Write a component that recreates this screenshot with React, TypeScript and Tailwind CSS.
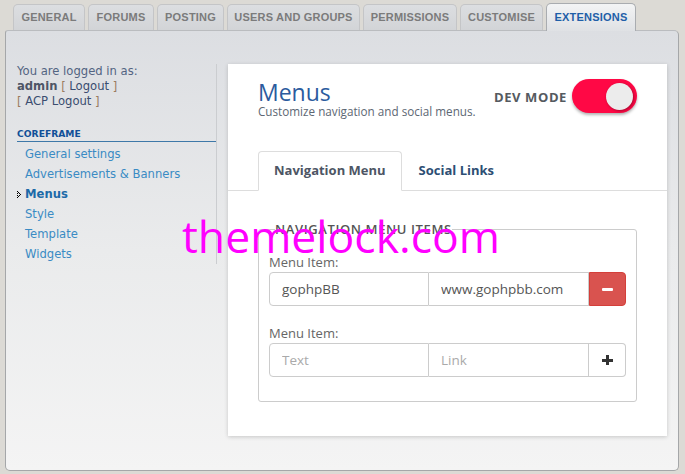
import React from "react";

const tabs: [string, string][] = [
  ["GENERAL", "w-[72px]"],
  ["FORUMS", "w-[66px]"],
  ["POSTING", "w-[67px]"],
  ["USERS AND GROUPS", "w-[133px]"],
  ["PERMISSIONS", "w-[94px]"],
  ["CUSTOMISE", "w-[83px]"],
  ["EXTENSIONS", "w-[90px]"],
];
const items = ["General settings", "Advertisements & Banners", "Menus", "Style", "Template", "Widgets"];

function Marker() {
  return (
    <svg width="4" height="7" viewBox="0 0 4 7" className="absolute left-[-8px] top-[7px]">
      <rect x="0" y="0" width="1" height="1" fill="#000" />
      <rect x="1" y="1" width="1" height="1" fill="#000" />
      <rect x="2" y="2" width="1" height="1" fill="#000" />
      <rect x="3" y="3" width="1" height="1" fill="#000" />
      <rect x="2" y="4" width="1" height="1" fill="#000" />
      <rect x="1" y="5" width="1" height="1" fill="#000" />
      <rect x="0" y="6" width="1" height="1" fill="#000" />
      <rect x="0" y="2" width="1" height="1" fill="#000" />
      <rect x="0" y="4" width="1" height="1" fill="#000" />
    </svg>
  );
}

export default function App() {
  return (
    <div className="relative w-[685px] h-[474px] overflow-hidden bg-[#dcdad5]">
      {/* top tabs */}
      <div className="flex items-end gap-[3px] pl-[13px] h-[30px] font-['Liberation_Sans',Arial,sans-serif] text-[11px] font-bold">
        {tabs.map(([t, w]) => {
          const active = t === "EXTENSIONS";
          return active ? (
            <div
              key={t}
              className={`${w} relative z-10 h-[28px] -mb-px flex items-center justify-center rounded-t-[5px] border border-b-0 border-[#a9acb0] bg-gradient-to-b from-[#f3f4f5] to-[#dfe1e4] text-[#1f5fa8] pb-[1px] tracking-[0.2px]`}
            >
              {t}
            </div>
          ) : (
            <div
              key={t}
              className={`${w} h-[26px] flex items-center justify-center rounded-t-[5px] border border-b-0 border-[#c4c5c7] bg-gradient-to-b from-[#dcdee1] to-[#d2d4d7] text-[#7b7b7b] tracking-[0.2px]`}
            >
              {t}
            </div>
          );
        })}
      </div>

      {/* main panel */}
      <div className="mx-[5px] h-[441px] w-[674px] flex items-start pt-[33px] rounded-[5px] rounded-tl-[3px] border border-[#a5a7a9] border-t-[#babcbf] bg-gradient-to-b from-[#dcdee2] via-[#eaebec] to-[#f4f4f4]">
        {/* sidebar */}
        <div className="ml-[11px] w-[200px] border-r border-[#cbcdd0] font-['DejaVu_Sans',Verdana,sans-serif]">
          <div className="text-[11.6px] leading-[15px] text-[#536482]">
            <div>You are logged in as:</div>
            <div>
              <span className="font-bold text-[#4e5566]">admin</span>{" "}
              <span className="text-[#9a7b60]">[</span> <span className="text-[#3a4d70]">Logout</span>{" "}
              <span className="text-[#9a7b60]">]</span>
            </div>
            <div>
              <span className="text-[#9a7b60]">[</span> <span className="text-[#3a4d70]">ACP Logout</span>{" "}
              <span className="text-[#9a7b60]">]</span>
            </div>
          </div>
          <div className="mt-[19px] pb-px border-b border-[#3e78a8] text-[9.2px] leading-[12px] font-bold text-[#115098]">
            COREFRAME
          </div>
          <div className="mt-[2px] pl-[8px] text-[11.6px] leading-[20px]">
            {items.map((i) =>
              i === "Menus" ? (
                <div key={i} className="relative font-bold text-[#1d6aa8]">
                  <Marker />
                  {i}
                </div>
              ) : (
                <div key={i} className="text-[#3a8bc4]">
                  {i}
                </div>
              )
            )}
          </div>
        </div>

        {/* card */}
        <div className="ml-[11px] w-[439px] h-[372px] bg-white shadow-[0_1px_4px_rgba(0,0,0,0.18)] font-['Open_Sans',sans-serif]">
          <div className="h-[87px] px-[30px] pt-[15px] flex justify-between items-start">
            <div>
              <div className="text-[23px] leading-[26px] text-[#2b5b9e]">Menus</div>
              <div className="text-[11.7px] leading-[13px] text-[#5d6773]">Customize navigation and social menus.</div>
            </div>
            <div className="flex items-center gap-[5px]">
              <span className="mt-[4px] text-[13px] font-bold tracking-[0.6px] text-[#555a60]">DEV MODE</span>
              <div className="w-[65px] h-[34px] rounded-full bg-[#ff0845] flex items-center justify-end pr-[4px] shadow-[0_2px_3px_rgba(0,0,0,0.3)]">
                <div className="w-[27px] h-[27px] rounded-full bg-[#ececec] shadow-[1px_1px_3px_rgba(0,0,0,0.35)]" />
              </div>
            </div>
          </div>

          <div className="flex items-end h-[40px] px-[30px] border-b border-[#dddddd] text-[13px] font-bold">
            <div className="h-[40px] -mb-px px-[15px] flex items-center rounded-t-[4px] border border-b-white border-[#dddddd] bg-white text-[#4d5564]">
              Navigation Menu
            </div>
            <div className="h-[39px] pl-[17px] flex items-center text-[#2d4e73]">Social Links</div>
          </div>

          <fieldset className="mt-[29px] mx-[30px] border border-[#cccccc] rounded-[3px] px-[10px] pt-[15px] pb-[24px]">
            <legend className="ml-[6px] text-[13px] leading-[18px] font-semibold tracking-[0.6px] text-[#555555]">
              NAVIGATION MENU ITEMS
            </legend>
            <div className="text-[13px] leading-[18px] text-[#666666] mb-[1px]">Menu Item:</div>
            <div className="flex h-[34px] text-[13.5px]">
              <input
                readOnly
                value="gophpBB"
                className="w-[160px] h-full px-[12px] border border-[#cccccc] rounded-l-[4px] text-[#555555] outline-none bg-white"
              />
              <input
                readOnly
                value="www.gophpbb.com"
                className="w-[160px] h-full px-[12px] border-y border-r border-[#cccccc] text-[#555555] outline-none bg-white"
              />
              <div className="w-[37px] h-full flex items-center justify-center bg-[#d9534f] border border-[#d43f3a] rounded-r-[4px]">
                <div className="w-[11px] h-[3px] bg-white rounded-[1px]" />
              </div>
            </div>
            <div className="mt-[18px] text-[13px] leading-[18px] text-[#666666] mb-[1px]">Menu Item:</div>
            <div className="flex h-[34px] text-[13.5px]">
              <input
                readOnly
                placeholder="Text"
                className="w-[160px] h-full px-[12px] border border-[#cccccc] rounded-l-[4px] text-[#555555] placeholder:text-[#aaaaaa] outline-none bg-white"
              />
              <input
                readOnly
                placeholder="Link"
                className="w-[160px] h-full px-[12px] border-y border-r border-[#cccccc] text-[#555555] placeholder:text-[#aaaaaa] outline-none bg-white"
              />
              <div className="relative w-[37px] h-full flex items-center justify-center bg-white border-y border-r border-[#cccccc] rounded-r-[4px]">
                <div className="absolute w-[11px] h-[3px] bg-[#333333]" />
                <div className="absolute w-[3px] h-[10px] bg-[#333333]" />
              </div>
            </div>
          </fieldset>
        </div>
      </div>

      {/* watermark */}
      <div className="absolute left-[182px] top-[213px] text-[44.5px] leading-[45px] text-[#ff00ff] font-['Open_Sans',sans-serif] pointer-events-none">
        themelock.com
      </div>
    </div>
  );
}
